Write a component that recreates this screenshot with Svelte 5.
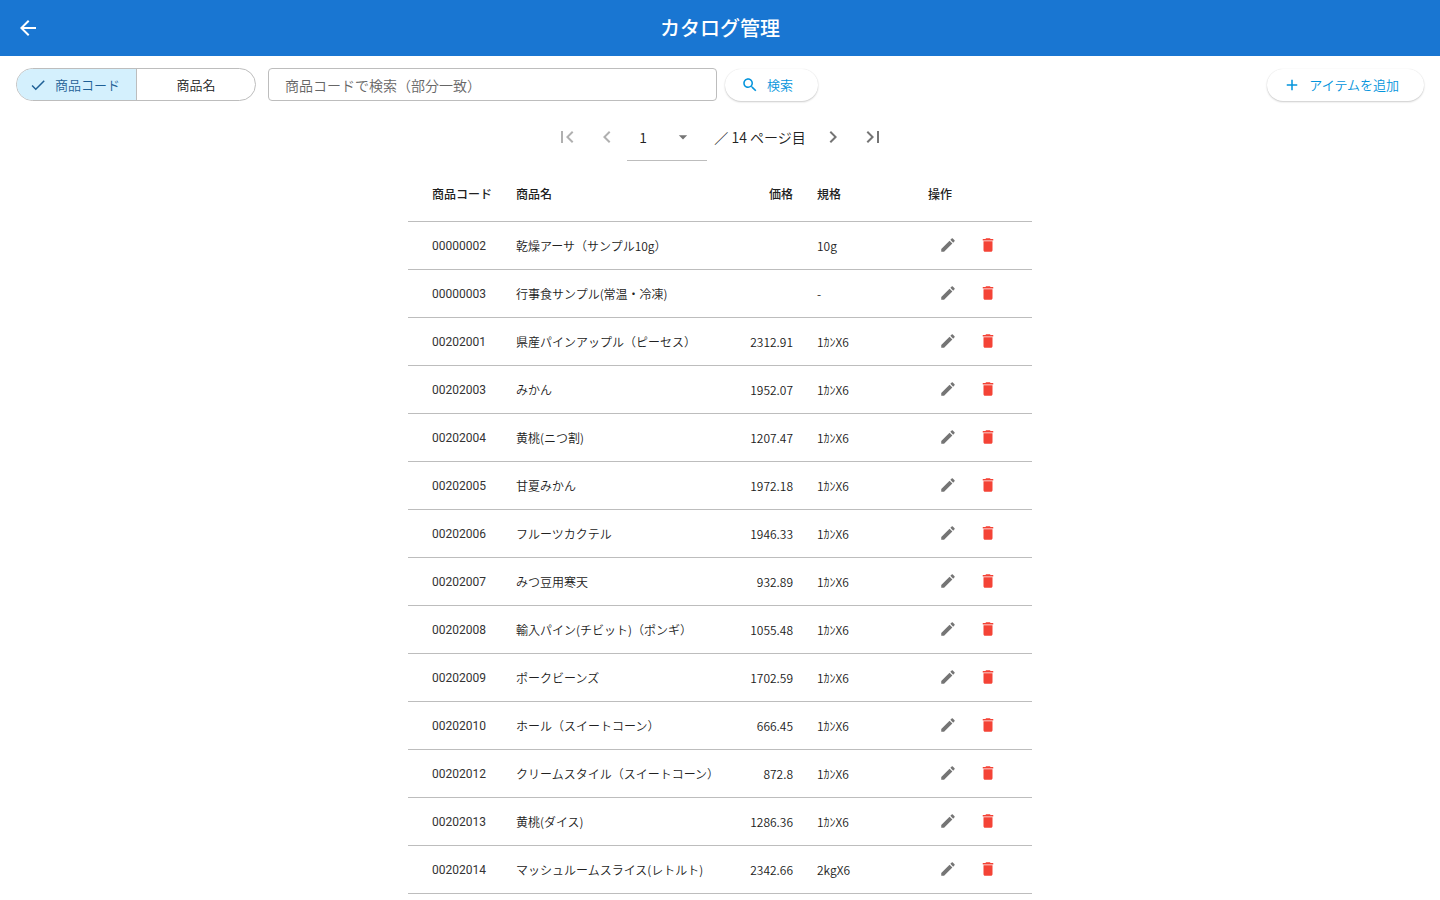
<script lang="ts">
	interface Item {
		code: string;
		name: string;
		price: string;
		spec: string;
	}

	const items: Item[] = [
		{ code: '00000002', name: '乾燥アーサ（サンプル10g）', price: '', spec: '10g' },
		{ code: '00000003', name: '行事食サンプル(常温・冷凍)', price: '', spec: '-' },
		{ code: '00202001', name: '県産パインアップル（ピーセス）', price: '2312.91', spec: '1ｶﾝX6' },
		{ code: '00202003', name: 'みかん', price: '1952.07', spec: '1ｶﾝX6' },
		{ code: '00202004', name: '黄桃(ニつ割)', price: '1207.47', spec: '1ｶﾝX6' },
		{ code: '00202005', name: '甘夏みかん', price: '1972.18', spec: '1ｶﾝX6' },
		{ code: '00202006', name: 'フルーツカクテル', price: '1946.33', spec: '1ｶﾝX6' },
		{ code: '00202007', name: 'みつ豆用寒天', price: '932.89', spec: '1ｶﾝX6' },
		{ code: '00202008', name: '輸入パイン(チビット)（ポンギ）', price: '1055.48', spec: '1ｶﾝX6' },
		{ code: '00202009', name: 'ポークビーンズ', price: '1702.59', spec: '1ｶﾝX6' },
		{ code: '00202010', name: 'ホール（スイートコーン）', price: '666.45', spec: '1ｶﾝX6' },
		{ code: '00202012', name: 'クリームスタイル（スイートコーン）', price: '872.8', spec: '1ｶﾝX6' },
		{ code: '00202013', name: '黄桃(ダイス)', price: '1286.36', spec: '1ｶﾝX6' },
		{ code: '00202014', name: 'マッシュルームスライス(レトルト)', price: '2342.66', spec: '2kgX6' }
	];

	const modes = [
		{ value: 'code', label: '商品コード' },
		{ value: 'name', label: '商品名' }
	];

	const pageCount = 14;
	const pages = Array.from({ length: pageCount }, (_, i) => i + 1);

	let mode = $state('code');
	let query = $state('');
	let page = $state(1);

	let placeholder = $derived(
		`${modes.find((m) => m.value === mode)?.label}で検索（部分一致）`
	);

	// Material icon paths, 24x24
	const icons = {
		back: 'M20 11H7.83l5.59-5.59L12 4l-8 8 8 8 1.41-1.41L7.83 13H20v-2z',
		check: 'M9 16.17 4.83 12l-1.42 1.41L9 19 21 7l-1.41-1.41z',
		search:
			'M15.5 14h-.79l-.28-.27C15.41 12.59 16 11.11 16 9.5 16 5.91 13.09 3 9.5 3S3 5.91 3 9.5 5.91 16 9.5 16c1.61 0 3.09-.59 4.23-1.57l.27.28v.79l5 4.99L20.49 19l-4.99-5zm-6 0C7.01 14 5 11.99 5 9.5S7.01 5 9.5 5 14 7.01 14 9.5 11.99 14 9.5 14z',
		add: 'M19 13h-6v6h-2v-6H5v-2h6V5h2v6h6v2z',
		first: 'M18.41 16.59 13.82 12l4.59-4.59L17 6l-6 6 6 6zM6 6h2v12H6z',
		prev: 'M15.41 7.41 14 6l-6 6 6 6 1.41-1.41L10.83 12z',
		next: 'M10 6 8.59 7.41 13.17 12l-4.58 4.59L10 18l6-6z',
		last: 'M5.59 7.41 10.18 12l-4.59 4.59L7 18l6-6-6-6zM16 6h2v12h-2z',
		dropdown: 'M7 10l5 5 5-5z',
		edit: 'M3 17.25V21h3.75L17.81 9.94l-3.75-3.75L3 17.25zM20.71 7.04c.39-.39.39-1.02 0-1.41l-2.34-2.34c-.39-.39-1.02-.39-1.41 0l-1.83 1.83 3.75 3.75 1.83-1.83z',
		trash: 'M6 19c0 1.1.9 2 2 2h8c1.1 0 2-.9 2-2V7H6v12zM19 4h-3.5l-1-1h-5l-1 1H5v2h14V4z'
	};
</script>

{#snippet icon(name: keyof typeof icons, size: number)}
	<svg width={size} height={size} viewBox="0 0 24 24" aria-hidden="true">
		<path d={icons[name]} fill="currentColor" />
	</svg>
{/snippet}

<header class="app-bar">
	<button class="icon-button" type="button" aria-label="戻る">{@render icon('back', 24)}</button>
	<h1>カタログ管理</h1>
</header>

<main>
	<form class="toolbar" onsubmit={(e) => e.preventDefault()}>
		<div class="segmented" role="radiogroup" aria-label="検索対象">
			{#each modes as m}
				<label class="segment" class:selected={mode === m.value}>
					<input type="radio" name="mode" value={m.value} bind:group={mode} />
					{#if mode === m.value}
						{@render icon('check', 18)}
					{/if}
					<span>{m.label}</span>
				</label>
			{/each}
		</div>
		<input class="query" type="text" aria-label="検索キーワード" {placeholder} bind:value={query} />
		<button class="pill" type="submit">{@render icon('search', 18)}<span>検索</span></button>
		<button class="pill add" type="button">{@render icon('add', 18)}<span>アイテムを追加</span></button>
	</form>

	<nav class="pager" aria-label="ページ">
		<button class="icon-button" type="button" aria-label="最初のページ" disabled={page === 1} onclick={() => (page = 1)}>
			{@render icon('first', 24)}
		</button>
		<button class="icon-button" type="button" aria-label="前のページ" disabled={page === 1} onclick={() => page--}>
			{@render icon('prev', 24)}
		</button>
		<div class="page-select">
			<select aria-label="ページ番号" bind:value={page}>
				{#each pages as p}
					<option value={p}>{p}</option>
				{/each}
			</select>
			<span class="arrow">{@render icon('dropdown', 20)}</span>
		</div>
		<span class="total">／ {pageCount} ページ目</span>
		<button class="icon-button" type="button" aria-label="次のページ" disabled={page === pageCount} onclick={() => page++}>
			{@render icon('next', 24)}
		</button>
		<button class="icon-button" type="button" aria-label="最後のページ" disabled={page === pageCount} onclick={() => (page = pageCount)}>
			{@render icon('last', 24)}
		</button>
	</nav>

	<table>
		<thead>
			<tr>
				<th class="code">商品コード</th>
				<th class="name">商品名</th>
				<th class="price">価格</th>
				<th class="spec">規格</th>
				<th class="actions">操作</th>
			</tr>
		</thead>
		<tbody>
			{#each items as item (item.code)}
				<tr>
					<td class="code">{item.code}</td>
					<td class="name">{item.name}</td>
					<td class="price">{item.price}</td>
					<td class="spec">{item.spec}</td>
					<td class="actions">
						<div class="action-buttons">
							<button class="icon-button edit" type="button" aria-label="{item.name}を編集">
								{@render icon('edit', 18)}
							</button>
							<button class="icon-button delete" type="button" aria-label="{item.name}を削除">
								{@render icon('trash', 18)}
							</button>
						</div>
					</td>
				</tr>
			{/each}
		</tbody>
	</table>
</main>

<style>
	:global(body) {
		background: #fff;
		color: #212121;
		font-family: 'Noto Sans CJK JP', sans-serif;
		font-size: 12px;
		font-weight: 350;
	}

	button,
	input,
	select {
		font: inherit;
		color: inherit;
		box-sizing: border-box;
	}

	svg {
		display: block;
		flex: none;
	}

	.icon-button {
		display: flex;
		align-items: center;
		justify-content: center;
		width: 40px;
		height: 40px;
		padding: 0;
		border: 0;
		border-radius: 50%;
		background: none;
		color: #757575;
		cursor: pointer;
	}

	.icon-button:disabled {
		color: #b0b0b0;
		cursor: default;
	}

	.app-bar {
		display: grid;
		grid-template-columns: 40px 1fr 40px;
		align-items: center;
		height: 56px;
		padding: 0 8px;
		background: #1976d2;
		color: #fff;
	}

	.app-bar .icon-button {
		color: #fff;
	}

	h1 {
		margin: 0;
		font-size: 20px;
		font-weight: 500;
		line-height: 30px;
		text-align: center;
	}

	.toolbar {
		display: flex;
		align-items: center;
		padding: 12px 16px;
	}

	.segmented {
		display: flex;
		box-sizing: border-box;
		height: 33px;
		margin-right: 12px;
		border: 1px solid #bdbdbd;
		border-radius: 17px;
		overflow: hidden;
	}

	.segment {
		position: relative;
		display: flex;
		align-items: center;
		justify-content: center;
		gap: 8px;
		box-sizing: border-box;
		width: 119px;
		font-size: 13px;
		cursor: pointer;
	}

	.segment + .segment {
		border-left: 1px solid #bdbdbd;
	}

	.segment.selected {
		justify-content: flex-start;
		padding-left: 12px;
		background: #d4f0fd;
		color: #1f6096;
	}

	.segment input {
		position: absolute;
		inset: 0;
		margin: 0;
		opacity: 0;
		cursor: pointer;
	}

	.query {
		flex: 0 1 449px;
		min-width: 0;
		height: 33px;
		margin-right: 8px;
		padding: 0 16px;
		border: 1px solid #bdbdbd;
		border-radius: 4px;
		background: transparent;
		font-size: 14px;
	}

	.query::placeholder {
		color: #666;
		opacity: 1;
	}

	.pill {
		display: flex;
		align-items: center;
		gap: 8px;
		height: 32px;
		padding: 0 25px 0 16px;
		border: 0;
		border-radius: 16px;
		background: #fff;
		box-shadow:
			0 1px 2px rgba(0, 0, 0, 0.2),
			0 0 1px rgba(0, 0, 0, 0.1);
		color: #0394dc;
		font-size: 13px;
		white-space: nowrap;
		cursor: pointer;
	}

	.pill.add {
		margin-left: auto;
	}

	.pager {
		display: flex;
		align-items: center;
		justify-content: center;
		height: 48px;
		margin-bottom: 5px;
		font-size: 14px;
	}

	.page-select {
		position: relative;
		width: 80px;
		height: 48px;
	}

	.page-select select {
		width: 100%;
		height: 100%;
		padding: 0 12px;
		border: 0;
		border-bottom: 1px solid #bdbdbd;
		border-radius: 0;
		background: transparent;
		appearance: none;
	}

	.arrow {
		position: absolute;
		top: 14px;
		right: 14px;
		color: #757575;
		pointer-events: none;
	}

	.total {
		padding: 0 7px;
		white-space: nowrap;
	}

	table {
		width: 100%;
		max-width: 624px;
		margin: 0 auto;
		border-collapse: separate;
		border-spacing: 0;
		table-layout: fixed;
	}

	th,
	td {
		box-sizing: border-box;
		height: 48px;
		padding: 0 12px;
		border-bottom: 1px solid #bdbdbd;
		text-align: left;
		white-space: nowrap;
	}

	th {
		height: 56px;
		font-weight: 500;
	}

	th.code,
	td.code {
		width: 96px;
		padding-left: 24px;
	}

	td.code {
		color: #333;
		font-family: Roboto, sans-serif;
		font-weight: 400;
	}

	.price {
		width: 70px;
		text-align: right;
	}

	.spec {
		width: 111px;
	}

	.actions {
		width: 116px;
	}

	td.actions {
		padding-top: 3px;
		vertical-align: top;
	}

	.action-buttons {
		display: flex;
	}

	.edit {
		color: #757575;
	}

	.delete {
		color: #f44336;
	}
</style>
